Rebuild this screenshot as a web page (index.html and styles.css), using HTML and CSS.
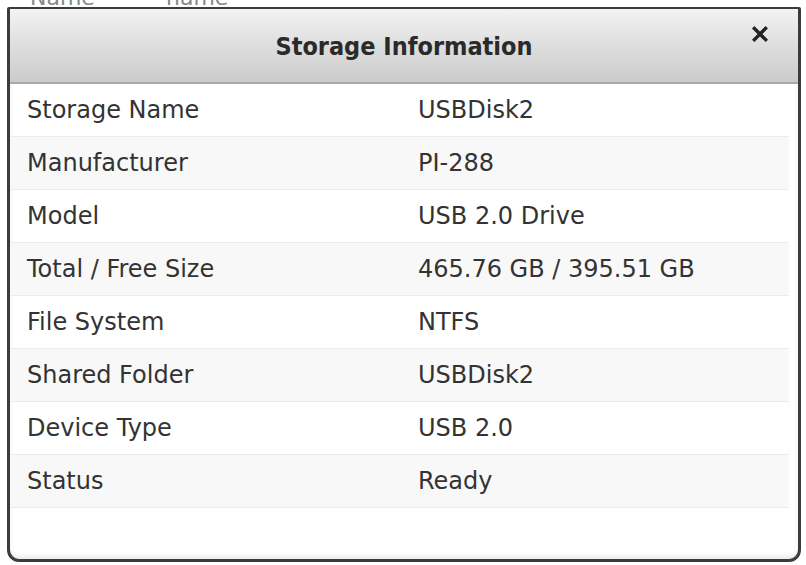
FILE: index.html
```html
<!DOCTYPE html>
<html lang="en">
<head>
	<meta charset="UTF-8">
	<title>Storage Information</title>
	<link rel="stylesheet" href="styles.css">
</head>
<body>
	<div class="backdrop">
		<span class="backdrop-name">Name</span>
		<span class="backdrop-value">name</span>
	</div>
	<div class="dialog">
		<div class="header">
			<h1 class="title">Storage Information</h1>
			<button class="close"><svg viewBox="0 0 16 16"><path d="M3 3L13 13M13 3L3 13"/></svg></button>
		</div>
		<div class="rows">
			<div class="row"><span class="label">Storage Name</span><span class="value">USBDisk2</span></div>
			<div class="row"><span class="label">Manufacturer</span><span class="value">PI-288</span></div>
			<div class="row"><span class="label">Model</span><span class="value">USB 2.0 Drive</span></div>
			<div class="row"><span class="label">Total / Free Size</span><span class="value">465.76 GB / 395.51 GB</span></div>
			<div class="row"><span class="label">File System</span><span class="value">NTFS</span></div>
			<div class="row"><span class="label">Shared Folder</span><span class="value">USBDisk2</span></div>
			<div class="row"><span class="label">Device Type</span><span class="value">USB 2.0</span></div>
			<div class="row"><span class="label">Status</span><span class="value">Ready</span></div>
		</div>
	</div>
</body>
</html>
```
FILE: styles.css
```css
* {
	margin: 0;
	padding: 0;
	box-sizing: border-box;
}
body {
	background-color: white;
	font-family: "DejaVu Sans", Verdana, sans-serif;
	color: #333;
	width: 806px;
	height: 565px;
	overflow: hidden;
}

/* Page behind the dialog */
.backdrop {
	height: 7px;
	overflow: hidden;
	position: relative;
	font-size: 22px;
	color: #888;
}
.backdrop span {
	position: absolute;
	bottom: -2px;
	line-height: 22px;
}
.backdrop-name {
	left: 30px;
}
.backdrop-value {
	left: 166px;
}

/* Dialog */
.dialog {
	margin-left: 7px;
	width: 794px;
	height: 555px;
	border: 3px solid #3c3c3c;
	border-top-width: 2px;
	border-radius: 2px 2px 12px 12px;
	background-color: white;
	box-shadow: inset 0 -3px 4px rgba(0, 0, 0, .08);
	display: flex;
	flex-direction: column;
	overflow: hidden;
}
.header {
	height: 75px;
	position: relative;
	display: flex;
	align-items: center;
	justify-content: center;
	background: linear-gradient(#f3f3f3, #e0e0e0 45%, #cbcbcb);
	border-bottom: 2px solid #a9a9a9;
}
.title {
	font-family: "DejaVu Sans Condensed", "DejaVu Sans", sans-serif;
	font-weight: bold;
	font-size: 25px;
	color: #2a2a2a;
	margin-top: 2px;
}
.close {
	position: absolute;
	right: 29px;
	top: 16px;
	width: 18px;
	height: 18px;
	border: none;
	background: none;
	cursor: pointer;
	display: flex;
}
.close svg {
	width: 100%;
	height: 100%;
	stroke: #222;
	stroke-width: 3;
	stroke-linecap: square;
}

/* Rows */
.rows {
	display: flex;
	flex-direction: column;
	margin-right: 9px;
}
.row {
	height: 53px;
	display: flex;
	align-items: center;
	font-size: 24px;
	border-bottom: 1px solid #ececec;
}
.row:nth-child(even) {
	background-color: #f8f8f8;
}
.label {
	width: 408px;
	padding-left: 17px;
}
.value {
	flex-grow: 1;
}
```
